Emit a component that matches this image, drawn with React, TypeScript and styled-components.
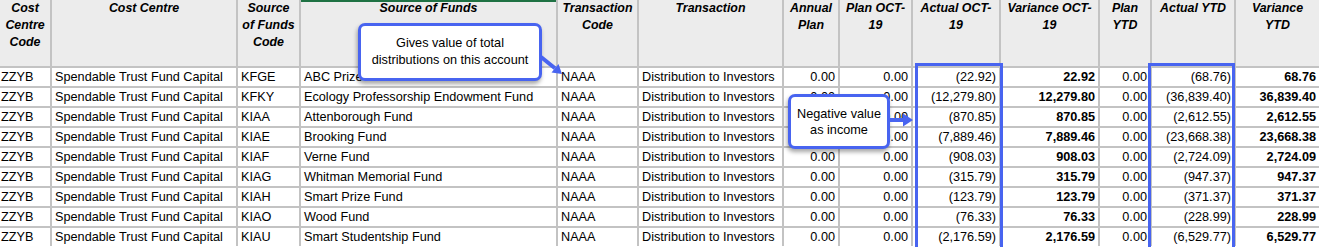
import React from 'react';
import styled, { createGlobalStyle } from 'styled-components';

const GlobalStyle = createGlobalStyle`
  html, body {
    margin: 0;
    padding: 0;
    background: #ffffff;
  }
  body {
    font-family: "Liberation Sans", Arial, sans-serif;
  }
`;

const BLUE = '#4864f0';

const Sheet = styled.div`
  position: relative;
  width: 1319px;
  height: 247px;
  overflow: hidden;
`;

const Grid = styled.div`
  display: grid;
  grid-template-columns: 50px 184px 61px 255px 79px 143px 54px 71px 86px 97px 50px 82px 83px;
  grid-template-rows: 66px;
  grid-auto-rows: 18px;
  gap: 2px;
  background: #c3c3c3;
`;

const HeadCell = styled.div<{ $selected?: boolean }>`
  background: #ececec;
  color: #000;
  font-weight: bold;
  font-style: italic;
  font-size: 12.4px;
  line-height: 17px;
  text-align: center;
  padding: 0 1px;
  box-shadow: ${p => (p.$selected ? 'inset 0 2px 0 #1f7244' : 'none')};
`;

const Cell = styled.div<{ $right?: boolean; $bold?: boolean }>`
  background: #ffffff;
  color: #000;
  font-size: 12.7px;
  line-height: 18px;
  white-space: nowrap;
  overflow: hidden;
  padding: ${p => (p.$right ? '0 3px 0 0' : '0 0 0 3px')};
  text-align: ${p => (p.$right ? 'right' : 'left')};
  font-weight: ${p => (p.$bold ? 'bold' : 'normal')};
`;

const FirstCell = styled(Cell)`
  padding-left: 1px;
`;

const Highlight = styled.div<{ $x: number; $w: number }>`
  position: absolute;
  left: ${p => p.$x}px;
  top: 63px;
  width: ${p => p.$w}px;
  height: 200px;
  border: 3px solid ${BLUE};
  box-sizing: border-box;
`;

const Callout = styled.div<{ $x: number; $y: number; $w: number; $h: number; $lh: number }>`
  position: absolute;
  left: ${p => p.$x}px;
  top: ${p => p.$y}px;
  width: ${p => p.$w}px;
  height: ${p => p.$h}px;
  box-sizing: border-box;
  border: 3px solid ${BLUE};
  border-radius: 7px;
  background: #ffffff;
  box-shadow: -1px 3px 4px rgba(0, 0, 0, 0.35);
  display: flex;
  flex-direction: column;
  align-items: center;
  justify-content: center;
  font-size: 12.7px;
  line-height: ${p => p.$lh}px;
  color: #000;
  text-align: center;
`;

const ArrowSvg = styled.svg<{ $x: number; $y: number }>`
  position: absolute;
  left: ${p => p.$x}px;
  top: ${p => p.$y}px;
  overflow: visible;
`;

const headers: { lines: string[]; selected?: boolean }[] = [
  { lines: ['Cost', 'Centre', 'Code'] },
  { lines: ['Cost Centre'] },
  { lines: ['Source', 'of Funds', 'Code'] },
  { lines: ['Source of Funds'], selected: true },
  { lines: ['Transaction', 'Code'] },
  { lines: ['Transaction'] },
  { lines: ['Annual', 'Plan'] },
  { lines: ['Plan OCT-', '19'] },
  { lines: ['Actual OCT-', '19'] },
  { lines: ['Variance OCT-', '19'] },
  { lines: ['Plan', 'YTD'] },
  { lines: ['Actual YTD'] },
  { lines: ['Variance', 'YTD'] },
];

const rows = [
  ['KFGE', 'ABC Prize Fund', '22.92', '68.76'],
  ['KFKY', 'Ecology Professorship Endowment Fund', '12,279.80', '36,839.40'],
  ['KIAA', 'Attenborough Fund', '870.85', '2,612.55'],
  ['KIAE', 'Brooking Fund', '7,889.46', '23,668.38'],
  ['KIAF', 'Verne Fund', '908.03', '2,724.09'],
  ['KIAG', 'Whitman Memorial Fund', '315.79', '947.37'],
  ['KIAH', 'Smart Prize Fund', '123.79', '371.37'],
  ['KIAO', 'Wood Fund', '76.33', '228.99'],
  ['KIAU', 'Smart Studentship Fund', '2,176.59', '6,529.77'],
];

const App: React.FC = () => {
  return (
    <>
      <GlobalStyle />
      <Sheet>
        <Grid>
          {headers.map(h => (
            <HeadCell key={h.lines.join(' ')} $selected={h.selected}>
              {h.lines.map((l, i) => (
                <div key={i}>{l}</div>
              ))}
            </HeadCell>
          ))}
          {rows.map(([code, fund, month, ytd]) => (
            <React.Fragment key={code}>
              <FirstCell>ZZYB</FirstCell>
              <Cell>Spendable Trust Fund Capital</Cell>
              <Cell>{code}</Cell>
              <Cell>{fund}</Cell>
              <Cell>NAAA</Cell>
              <Cell>Distribution to Investors</Cell>
              <Cell $right>0.00</Cell>
              <Cell $right>0.00</Cell>
              <Cell $right>({month})</Cell>
              <Cell $right $bold>{month}</Cell>
              <Cell $right>0.00</Cell>
              <Cell $right>({ytd})</Cell>
              <Cell $right $bold>{ytd}</Cell>
            </React.Fragment>
          ))}
        </Grid>

        <Highlight $x={915} $w={88} />
        <Highlight $x={1148} $w={87} />

        <Callout $x={358} $y={23} $w={184} $h={58} $lh={17}>
          <div>Gives value of total</div>
          <div>distributions on this account</div>
        </Callout>
        <ArrowSvg $x={536} $y={52} width="30" height="26">
          <line x1="5" y1="5" x2="19" y2="16.3" stroke={BLUE} strokeWidth="4" />
          <polygon points="26,22 15.5,20.6 22.5,12" fill={BLUE} />
        </ArrowSvg>

        <Callout $x={788} $y={94} $w={102} $h={55} $lh={16}>
          <div>Negative value</div>
          <div>as income</div>
        </Callout>
        <ArrowSvg $x={886} $y={110} width="30" height="20">
          <line x1="2" y1="10" x2="18" y2="10" stroke={BLUE} strokeWidth="4" />
          <polygon points="27,10 17,3.5 17,16.5" fill={BLUE} />
        </ArrowSvg>
      </Sheet>
    </>
  );
};

export default App;
